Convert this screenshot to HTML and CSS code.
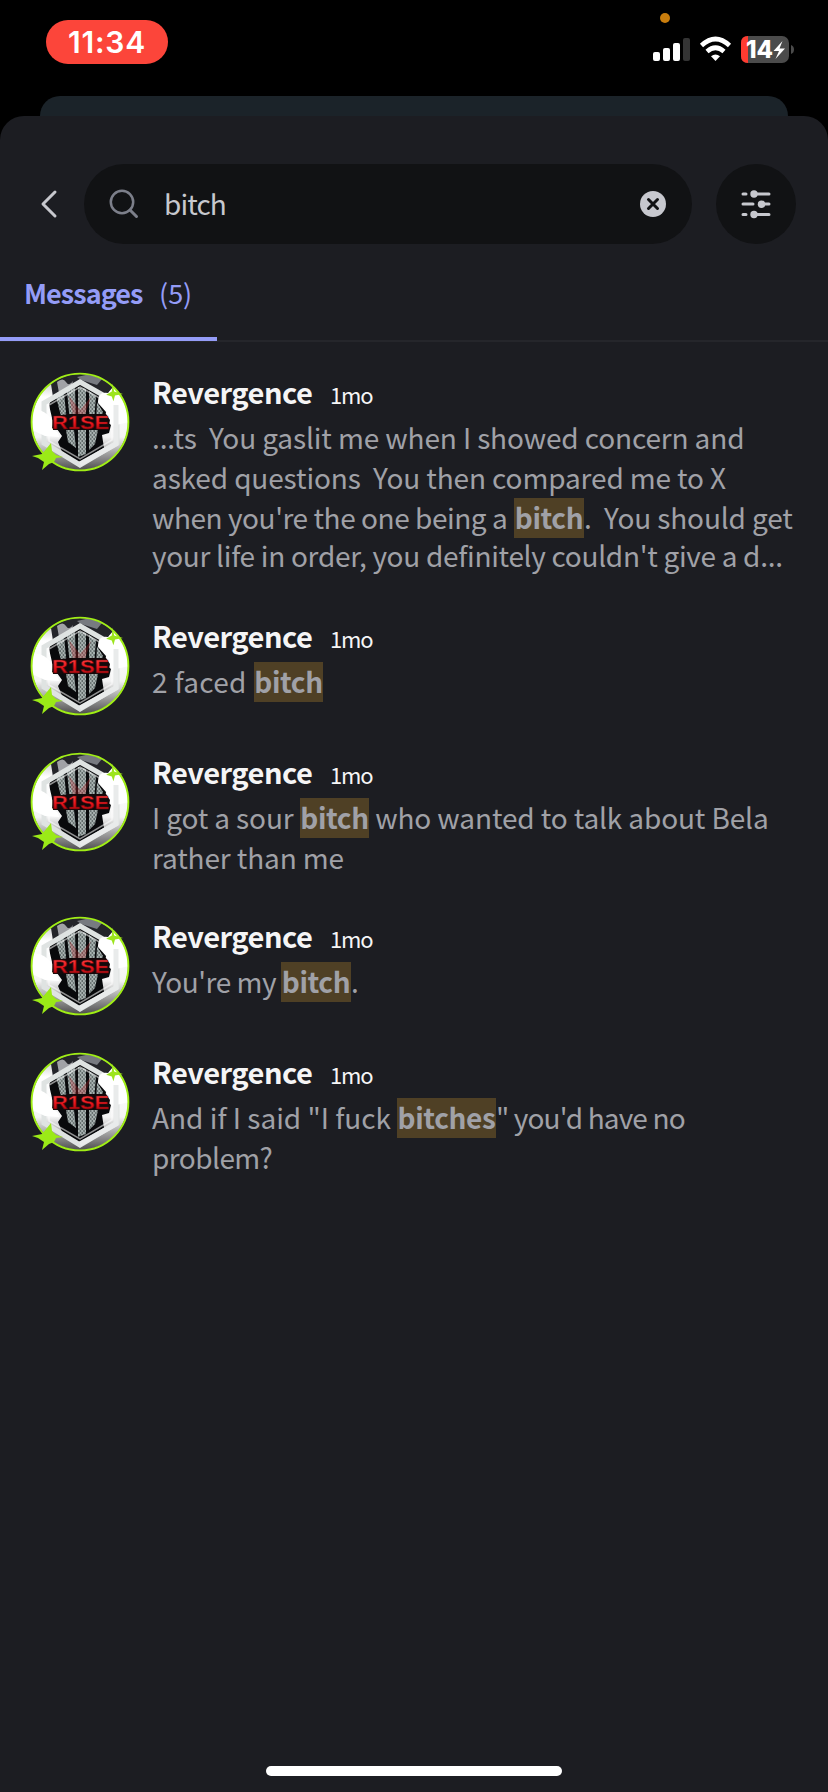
FILE: index.html
```html
<!DOCTYPE html>
<html lang="en">
<head>
<meta charset="utf-8">
<title>Search</title>
<link rel="stylesheet" href="styles.css">
</head>
<body>
<svg class="defs" aria-hidden="true">
  <defs>
    <linearGradient id="silver" x1="0" y1="0" x2="0" y2="1"><stop offset="0" stop-color="#aaa"/><stop offset=".25" stop-color="#fff"/><stop offset=".65" stop-color="#f4f4f4"/><stop offset="1" stop-color="#444"/></linearGradient>
    <linearGradient id="red" x1="0" y1="0" x2="0" y2="1"><stop offset="0" stop-color="#ff4a4a"/><stop offset=".55" stop-color="#e8141b"/><stop offset="1" stop-color="#8c0509"/></linearGradient>
    <pattern id="mesh" width="3.4" height="4" patternUnits="userSpaceOnUse"><rect width="3.4" height="4" fill="#a9b3b1"/><circle cx="1" cy="1" r=".8" fill="#303b3b"/><circle cx="2.7" cy="3" r=".8" fill="#303b3b"/></pattern>
    <clipPath id="disc"><circle cx="60" cy="62" r="48"/></clipPath>
    <symbol id="avatar" viewBox="10 12 100 100">
      <g clip-path="url(#disc)">
        <rect x="10" y="12" width="100" height="100" fill="url(#silver)"/>
        <path d="M31 24Q38 16 50 13L78 14Q91 18 97 29L90 31 86 38 60 22 40 32 33 37Z" fill="#24252a"/>
        <path d="M37 22q6-5 9 0t7-1l-2 8-12 4Z" fill="#a1a2a6"/>
        <path d="M57 17l13-3 12 5-5 6-16-5Z" fill="#777a80"/>
        <path d="M33 35L60 24 80 34 78 43 86 52 85 60 91 65 89 73 82 75 84 88 72 98 61 106 43 94 38 82 42 76 37 69 31 68 32 58 29 45Z" fill="#08090b"/>
        <path d="M36 37L44 33 47 62 42 60ZM47 32L55 28 56 62 50 62ZM58 27L66 29 66 62 58 62ZM69 31L76 36 74 62 69 62ZM77 42L83 52 80 62 76 62ZM46 70L54 70 56 88 48 82ZM58 70L66 70 66 94 58 97ZM69 70L78 70 75 84 69 90Z" fill="url(#mesh)"/>
        <path d="M49 36L60 50 71 37 65 55 60 60 53 55Z" fill="#c5262b" opacity=".3"/>
        <path d="M60 22L97 43V83L60 105 24 83V43Z" fill="none" stroke="#dfe3e2" stroke-width="5"/>
        <path d="M60 27L92 45V80L60 99 29 81V45Z" fill="none" stroke="#fff" stroke-width="1.5" opacity=".55"/>
        <path d="M12 50Q22 47 33 60L32 69 38 73 39 77 25 76 12 70ZM78 42Q78 31 88 33L93 27Q108 40 109 62L92 66 88 58 87 51Z" fill="#fff"/>
        <path d="M60 104L96 84V45" fill="none" stroke="#e9ebeb" stroke-width="5"/>
        <path d="M50 54H86L90 60 88 70H33L32 56Z" fill="#12080a"/>
        <text x="32" y="69" class="avatar-word" textLength="57" lengthAdjust="spacingAndGlyphs">R1SE</text>
      </g>
      <circle cx="60" cy="62" r="48.4" fill="none" stroke="#a0ee16" stroke-width="1.9"/>
      <path d="M92 22L94 32 105 35 95 37 93 44 91 38 84 36 91 32Z" transform="translate(19 6) scale(.8)" fill="#9ce51c"/>
      <path d="M31 83L32 91 36 95 43 97 36 98 34 102 29 104 22 110 24 102 18 98 12 96 22 94Z" fill="#9bea17"/>
    </symbol>
  </defs>
</svg>
<div class="screen">
  <header class="status">
    <div class="clock">11:34</div>
    <svg class="indicators" viewBox="0 0 150 54">
      <circle cx="13" cy="8" r="5" fill="#c97d0d"/>
      <rect x="1" y="42" width="7" height="9" rx="2" fill="#fff"/><rect x="11" y="38" width="7" height="13" rx="2" fill="#fff"/><rect x="21" y="33" width="7" height="18" rx="2" fill="#fff"/><rect x="31" y="28" width="7" height="23" rx="2" fill="#343434"/>
      <g fill="none" stroke="#fff" stroke-width="4.600"><path d="M49.500 35.500Q63.500 22.500 77.500 35.500"/><path d="M55 41.500Q63.500 34 72 41.500"/></g><path d="M59 46.200Q63.500 42.700 68 46.200L63.500 51Z" fill="#fff"/>
      <rect x="89" y="26" width="48" height="27" rx="7" fill="#4b4b4b"/><path d="M96 26V53Q89 53 89 46V33Q89 26 96 26Z" fill="#ff3b30"/><path d="M139 35Q142 36 142 39.500T139 44Z" fill="#4b4b4b"/>
      <text x="94" y="48" class="charge" textLength="27">14</text><path d="M130.500 31L121.500 41H127L123.500 49 133 38.500H127.500Z" fill="#fff"/>
    </svg>
  </header>
  <div class="underlay"></div>
  <main class="sheet">
    <div class="searchbar">
      <svg class="back" viewBox="0 0 18 30"><path d="M15 3L3 15 15 27" fill="none" stroke="#c7c8ce" stroke-width="3" stroke-linecap="round" stroke-linejoin="round"/></svg>
      <div class="field">
        <svg class="lens" viewBox="0 0 30 30"><circle cx="13" cy="13" r="11.200" fill="none" stroke="#7c7f8a" stroke-width="2.500"/><path d="M21 21L27.500 27.500" stroke="#7c7f8a" stroke-width="3" stroke-linecap="round"/></svg>
        <span class="query">bitch</span>
        <svg class="clear" viewBox="0 0 26 26"><circle cx="13" cy="13" r="13" fill="#c7c8ce"/><path d="M8.500 8.500L17.500 17.500M17.500 8.500L8.500 17.500" stroke="#111214" stroke-width="3" stroke-linecap="round"/></svg>
      </div>
      <div class="filter">
        <svg viewBox="0 0 32 30"><g stroke="#c7c8ce" stroke-width="3" stroke-linecap="round"><path d="M3 5H6M14 5H29M3 15H13M22 15H29M3 25.500H6M14 25.500H29"/></g><g fill="#c7c8ce"><circle cx="14" cy="5" r="3.700"/><circle cx="21.500" cy="15.200" r="3.700"/><circle cx="14" cy="25.500" r="3.700"/></g></svg>
      </div>
    </div>
    <nav class="tabs"><div class="tab"><span class="tab-name">Messages</span><span class="tab-count">(5)</span></div></nav>
    <section class="results">
      <article class="result"><svg class="avatar"><use href="#avatar"/></svg><div class="content">
        <div class="heading"><span class="name">Revergence</span><span class="age">1mo</span></div>
        <div class="line a1">...ts&nbsp; You gaslit me when I showed concern and</div>
        <div class="line a2">asked questions&nbsp; You then compared me to X</div>
        <div class="line a3"><span class="lead">when you're the one being a </span><mark>bitch</mark>.&nbsp; You should get</div>
        <div class="line a4">your life in order, you definitely couldn't give a d...</div>
      </div></article>
      <article class="result"><svg class="avatar"><use href="#avatar"/></svg><div class="content">
        <div class="heading"><span class="name">Revergence</span><span class="age">1mo</span></div>
        <div class="line b1"><span class="lead">2 faced </span><mark>bitch</mark></div>
      </div></article>
      <article class="result"><svg class="avatar"><use href="#avatar"/></svg><div class="content">
        <div class="heading"><span class="name">Revergence</span><span class="age">1mo</span></div>
        <div class="line c1"><span class="lead">I got a sour </span><mark>bitch</mark> who wanted to talk about Bela</div>
        <div class="line c2">rather than me</div>
      </div></article>
      <article class="result"><svg class="avatar"><use href="#avatar"/></svg><div class="content">
        <div class="heading"><span class="name">Revergence</span><span class="age">1mo</span></div>
        <div class="line d1"><span class="lead">You're my </span><mark>bitch</mark>.</div>
      </div></article>
      <article class="result"><svg class="avatar"><use href="#avatar"/></svg><div class="content">
        <div class="heading"><span class="name">Revergence</span><span class="age">1mo</span></div>
        <div class="line e1"><span class="lead">And if I said "I fuck </span><mark class="long">bitches</mark>" you'd have no</div>
        <div class="line e2">problem?</div>
      </div></article>
    </section>
    <div class="home"></div>
  </main>
</div>
</body>
</html>
```
FILE: styles.css
```css
* { box-sizing: border-box; }
body { margin: 0; background: #000; font-family: "Noto Sans CJK SC", "Noto Sans", sans-serif; }
.defs { position: absolute; width: 0; height: 0; }
.screen { display: flex; flex-direction: column; width: 828px; height: 1792px; overflow: hidden; }
.status { display: flex; justify-content: space-between; align-items: flex-start; height: 96px; padding: 0 26px 0 46px; flex: none; }
.clock { width: 122px; height: 44px; margin-top: 20px; border-radius: 22px; background: #fc453a; color: #fff; font: 600 30px/44px Inter, sans-serif; letter-spacing: .8px; text-align: center; }
.indicators { width: 150px; height: 54px; margin-top: 10px; }
.charge { font: 800 24px Inter, sans-serif; fill: #fff; }
.underlay { height: 20px; flex: none; margin: 0 40px; border-radius: 20px 20px 0 0; background: #1b2329; }
.sheet { display: flex; flex-direction: column; flex: 1; background: #1c1d22; border-radius: 24px 24px 0 0; padding-top: 48px; }
.searchbar { display: flex; align-items: center; height: 80px; padding: 0 32px 0 40px; flex: none; }
.back { width: 18px; height: 30px; margin-right: 26px; }
.field { display: flex; align-items: center; width: 608px; height: 80px; border-radius: 40px; background: #111214; padding: 0 26px 0 25px; }
.lens { width: 30px; height: 30px; }
.query { flex: 1; margin: -2px 0 0 25px; font-size: 28px; line-height: 40px; letter-spacing: -.9px; color: #c7c8ce; }
.clear { width: 26px; height: 26px; }
.filter { display: flex; align-items: center; justify-content: center; width: 80px; height: 80px; margin-left: 24px; border-radius: 50%; background: #111214; }
.filter svg { width: 32px; height: 30px; }
.tabs { height: 98px; flex: none; border-bottom: 2px solid #25262b; }
.tab { display: flex; width: 217px; height: 97px; padding: 29px 0 0 24px; border-bottom: 4px solid #949cf7; border-radius: 0 4px 0 0; color: #949cf7; font-size: 27px; line-height: 40px; }
.tab-name { width: 135px; font-weight: 600; letter-spacing: -.95px; }
.results { flex: 1; padding-top: 12px; }
.result { display: flex; gap: 22px; min-height: 136px; padding: 18px 0 18px 30px; }
.avatar { width: 100px; height: 100px; flex: none; }
.avatar-word { font: 900 19px "Liberation Sans", sans-serif; fill: url(#red); stroke: #54080c; stroke-width: .5px; }
.content { padding-bottom: 2px; }
.heading { display: flex; align-items: baseline; height: 46px; line-height: 39px; color: #f5f5f6; }
.name { width: 178px; font-size: 29px; font-weight: 600; letter-spacing: -.5px; }
.age { font-size: 22px; letter-spacing: -1.2px; }
.line { height: 40px; font-size: 28px; line-height: 38px; color: #a0a1a7; white-space: pre; letter-spacing: -.13px; }
.a4 { margin: -2px 0 2px; letter-spacing: -.3px; }
.e1 { letter-spacing: -.85px; }
.e2 { letter-spacing: -.55px; }
.lead { display: inline-block; }
mark { display: inline-block; width: 69px; height: 40px; background: #4f4025; color: #a0a1a7; font-weight: 700; letter-spacing: -.4px; text-align: center; vertical-align: top; }
.long { width: 99px; }
.a3 mark, .d1 mark { width: 70px; }
.a3 .lead { width: 362px; letter-spacing: -.45px; }
.b1 .lead { width: 102px; letter-spacing: .3px; }
.c1 .lead { width: 148px; }
.d1 .lead { width: 129px; letter-spacing: -.45px; }
.e1 .lead { width: 245px; letter-spacing: 0; }
.home { width: 296px; height: 10px; margin: 0 auto 16px; border-radius: 5px; background: #fff; }
```
